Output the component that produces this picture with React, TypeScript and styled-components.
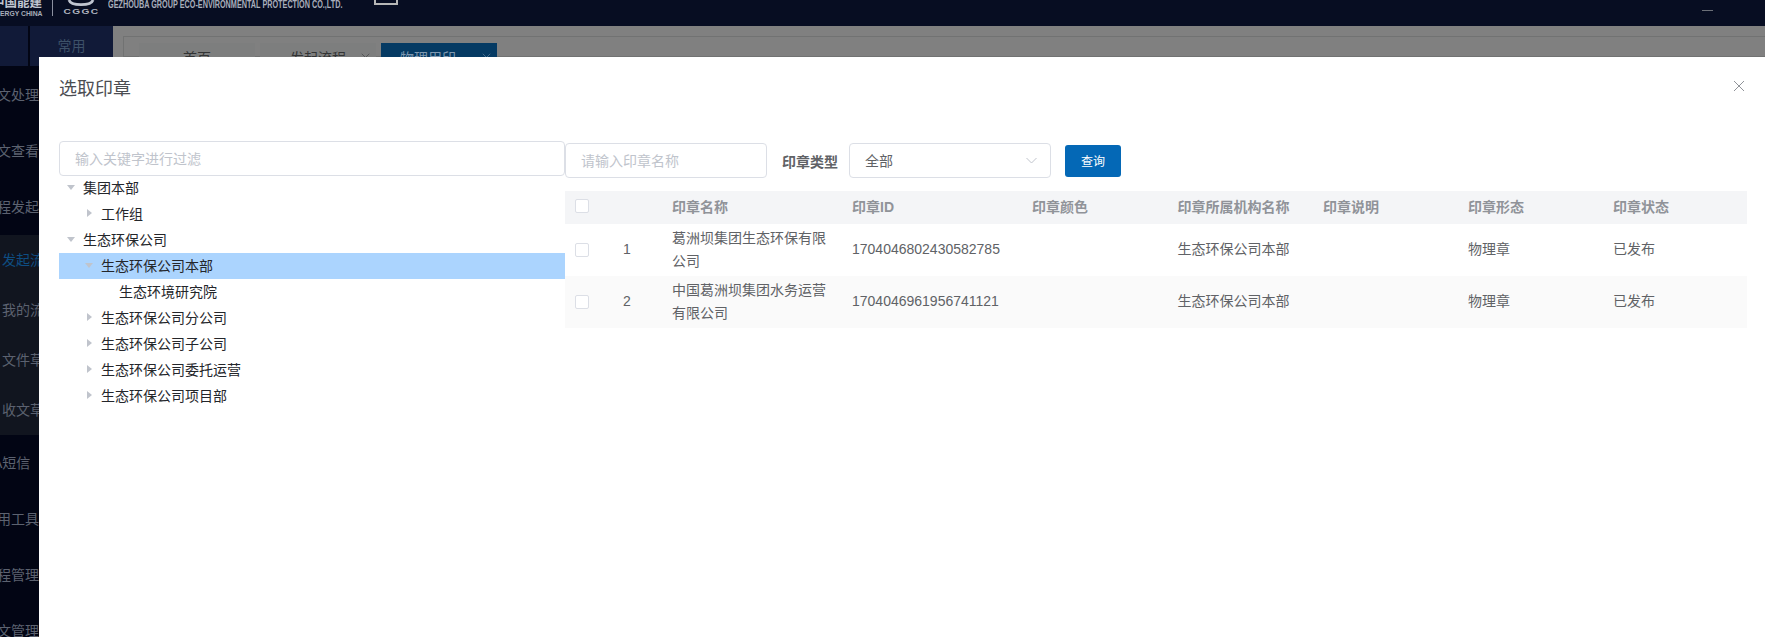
import { FC } from 'react';
import styled, { createGlobalStyle } from 'styled-components';

const GlobalStyle = createGlobalStyle`
  html, body {
    margin: 0;
    padding: 0;
    background: #808080;
  }
  * {
    box-sizing: border-box;
  }
  body {
    font-family: "Liberation Sans", "Noto Sans CJK SC", sans-serif;
    font-size: 14px;
  }
`;

const Page = styled.div`
  position: relative;
  width: 1765px;
  height: 637px;
  overflow: hidden;
  display: flex;
  flex-direction: column;
  background: #808080;
`;

/* top header, the logo is cut by the top of the window */
const Header = styled.header`
  flex: none;
  height: 26px;
  background: #070d22;
  display: flex;
  align-items: flex-start;
  overflow: hidden;
  position: relative;
`;

const BrandCn = styled.div`
  width: 43px;
  flex: none;
  display: flex;
  flex-direction: column;
  color: #c0c5d0;
  overflow: hidden;
`;

const BrandCnTitle = styled.span`
  margin-top: -4px;
  margin-left: -8px;
  font-size: 12.5px;
  line-height: 14px;
  font-weight: 700;
  white-space: nowrap;
`;

const BrandEn = styled.span`
  margin-left: -9.5px;
  font-size: 6.8px;
  line-height: 8px;
  font-weight: 700;
  color: #a8adba;
  white-space: nowrap;
`;

const BrandDivider = styled.span`
  flex: none;
  width: 1px;
  height: 16px;
  margin-left: 9px;
  background: #8b90a0;
`;

const LogoMark = styled.div`
  flex: none;
  width: 36px;
  margin-left: 10px;
  display: flex;
  flex-direction: column;
  align-items: center;
`;

const LogoCode = styled.span`
  margin-top: 1px;
  font-size: 7px;
  line-height: 6px;
  font-weight: 700;
  letter-spacing: 1px;
  color: #aeb3bf;
  transform: scaleX(1.45);
`;

const CompanyEn = styled.span`
  flex: none;
  width: 266px;
  margin-left: 9px;
  font-size: 10px;
  line-height: 10px;
  font-weight: 700;
  color: #a9aebb;
  white-space: nowrap;
  transform: scaleX(0.725);
  transform-origin: left top;
`;

const MenuToggle = styled.span`
  flex: none;
  width: 24px;
  height: 6px;
  border-top: 1px solid #b6b6b6;
  border-bottom: 2px solid #b6b6b6;
  border-left: 2px solid #b6b6b6;
  border-right: 2px solid #b6b6b6;
  margin-top: -1px;
`;

const UserDash = styled.span`
  position: absolute;
  left: 1702px;
  top: 10px;
  width: 11px;
  height: 1px;
  background: #6b6f78;
`;

const Body = styled.div`
  flex: 1;
  display: flex;
  min-height: 0;
`;

const Sidebar = styled.aside`
  flex: none;
  width: 113px;
  background: #020514;
  overflow: hidden;
  display: flex;
  flex-direction: column;
`;

const Rail = styled.div`
  flex: none;
  height: 41px;
  display: flex;
  gap: 2px;
`;

const RailCell = styled.div<{ $wide?: boolean }>`
  width: ${({ $wide }) => ($wide ? '83px' : '28px')};
  height: 40px;
  background: #111a38;
  color: #3d5168;
  font-size: 14px;
  line-height: 40px;
  text-align: center;
`;

const MenuItem = styled.div<{ $shift: number }>`
  flex: none;
  height: 56px;
  line-height: 56px;
  margin-left: ${({ $shift }) => $shift}px;
  color: #5c6270;
  white-space: nowrap;
`;

const SubMenu = styled.div`
  flex: none;
  height: 200px;
  background: #11151f;
`;

const SubItem = styled.div<{ $active?: boolean }>`
  height: 50px;
  line-height: 50px;
  padding-left: 2px;
  color: ${({ $active }) => ($active ? '#0e4d82' : '#5c6270')};
  white-space: nowrap;
`;

const Content = styled.main`
  flex: 1;
  padding: 10px 0 0 10px;
  min-width: 0;
`;

const TabBar = styled.div`
  height: 21px;
  border: 1px solid #717272;
  border-right: 0;
  padding: 6px 0 0 15px;
  display: flex;
  gap: 5px;
`;

const Tab = styled.div<{ $active?: boolean }>`
  flex: none;
  width: 116px;
  height: 30px;
  line-height: 30px;
  padding-right: ${({ $active }) => ($active ? '22px' : '0')};
  background: ${({ $active }) => ($active ? '#053a63' : '#7d7e7e')};
  color: ${({ $active }) => ($active ? '#7f98b0' : '#333435')};
  display: flex;
  justify-content: center;
  position: relative;
`;

const TabClose = styled.span`
  position: absolute;
  right: 6px;
  top: 10px;
  display: flex;
  opacity: 0.7;
`;

/* dialog, lies over the page */
const Modal = styled.section`
  position: absolute;
  left: 39px;
  top: 57px;
  right: 0;
  bottom: 0;
  background: #fff;
  padding: 21px 18px 0 20px;
`;

const ModalTitle = styled.h2`
  margin: 0;
  font-size: 18px;
  line-height: 22px;
  font-weight: 400;
  color: #4b4d52;
`;

const CloseButton = styled.button`
  position: absolute;
  top: 23px;
  right: 20px;
  width: 12px;
  height: 12px;
  padding: 0;
  border: 0;
  background: none;
  display: flex;
  color: #909399;
`;

const ModalBody = styled.div`
  margin-top: 41px;
  display: flex;
`;

const TreePane = styled.div`
  flex: none;
  width: 506px;
`;

const TextInput = styled.div<{ $width?: number }>`
  flex: none;
  width: ${({ $width }) => ($width ? `${$width}px` : '100%')};
  height: 35px;
  line-height: 34px;
  padding: 0 15px;
  border: 1px solid #dcdfe6;
  border-radius: 4px;
  background: #fff;
  color: #c0c4cc;
`;

const TreeList = styled.div`
  margin-top: -1px;
`;

const TreeRow = styled.div<{ $level: number; $selected?: boolean }>`
  height: 26px;
  padding-left: ${({ $level }) => $level * 18 + 6}px;
  padding-bottom: 2px;
  display: flex;
  align-items: center;
  background: ${({ $selected }) => ($selected ? '#abd4fe' : 'transparent')};
  color: #24262b;
  white-space: nowrap;
`;

const Caret = styled.span<{ $state: 'open' | 'closed' | 'leaf' }>`
  flex: none;
  width: 12px;
  height: 12px;
  margin-right: 6px;
  display: flex;
  align-items: center;
  justify-content: center;

  &::before {
    content: '';
    display: ${({ $state }) => ($state === 'leaf' ? 'none' : 'block')};
    width: 0;
    height: 0;
    border-style: solid;
    border-color: transparent;
    border-width: ${({ $state }) =>
      $state === 'open' ? '5px 4px 0 4px' : '4px 0 4px 5px'};
    border-top-color: ${({ $state }) => ($state === 'open' ? '#c0c4cc' : 'transparent')};
    border-left-color: ${({ $state }) => ($state === 'closed' ? '#c0c4cc' : 'transparent')};
  }
`;

const TablePane = styled.div`
  flex: 1;
  min-width: 0;
  padding-top: 2px;
`;

const Toolbar = styled.div`
  display: flex;
  align-items: center;
  height: 35px;
`;

const FieldLabel = styled.label`
  flex: none;
  margin: 0 11px 0 15px;
  font-weight: 700;
  color: #606266;
`;

const SelectBox = styled.div`
  flex: none;
  width: 202px;
  height: 35px;
  padding: 0 13px 1px 15px;
  border: 1px solid #dcdfe6;
  border-radius: 4px;
  color: #606266;
  display: flex;
  align-items: center;
  justify-content: space-between;
`;

const QueryButton = styled.button`
  flex: none;
  width: 56px;
  height: 32px;
  margin-left: 14px;
  padding: 0;
  border: 0;
  border-radius: 3px;
  background: #0468b6;
  color: #fff;
  font-family: inherit;
  font-size: 12px;
`;

const columns = '27px 70px 180px 180px 145.5px 145.5px 145px 145px 1fr';

const TableHead = styled.div`
  margin-top: 13px;
  height: 33px;
  padding-bottom: 3px;
  display: grid;
  grid-template-columns: ${columns};
  align-items: center;
  background: #f4f5f7;
  color: #909399;
  font-weight: 700;
`;

const TableRow = styled.div<{ $striped?: boolean }>`
  height: 52px;
  padding-bottom: 1px;
  display: grid;
  grid-template-columns: ${columns};
  align-items: center;
  background: ${({ $striped }) => ($striped ? '#fafafa' : '#fff')};
  color: #606266;
  line-height: 23px;
`;

const Cell = styled.div<{ $center?: boolean }>`
  padding: 0 10px;
  text-align: ${({ $center }) => ($center ? 'center' : 'left')};
  min-width: 0;
`;

const CheckCell = styled.div`
  padding-left: 10px;
  display: flex;
`;

const Checkbox = styled.span`
  flex: none;
  width: 14px;
  height: 14px;
  border: 1px solid #dcdfe6;
  border-radius: 2px;
  background: #fff;
`;

const treeNodes: { label: string; level: number; state: 'open' | 'closed' | 'leaf'; selected?: boolean }[] = [
  { label: '集团本部', level: 0, state: 'open' },
  { label: '工作组', level: 1, state: 'closed' },
  { label: '生态环保公司', level: 0, state: 'open' },
  { label: '生态环保公司本部', level: 1, state: 'open', selected: true },
  { label: '生态环境研究院', level: 2, state: 'leaf' },
  { label: '生态环保公司分公司', level: 1, state: 'closed' },
  { label: '生态环保公司子公司', level: 1, state: 'closed' },
  { label: '生态环保公司委托运营', level: 1, state: 'closed' },
  { label: '生态环保公司项目部', level: 1, state: 'closed' },
];

const headers = ['印章名称', '印章ID', '印章颜色', '印章所属机构名称', '印章说明', '印章形态', '印章状态'];

const seals = [
  { name: '葛洲坝集团生态环保有限公司', id: '1704046802430582785' },
  { name: '中国葛洲坝集团水务运营有限公司', id: '1704046961956741121' },
];

const Chevron: FC = () => (
  <svg width="11" height="7" viewBox="0 0 11 7" fill="none">
    <path d="M0.5 1L5.5 6L10.5 1" stroke="#c0c4cc" strokeWidth="1" />
  </svg>
);

const Cross: FC<{ size?: number }> = ({ size = 12 }) => (
  <svg width={size} height={size} viewBox="0 0 12 12" fill="none">
    <path d="M1 1L11 11M11 1L1 11" stroke="currentColor" strokeWidth="1" />
  </svg>
);

export default function App() {
  return (
    <Page>
      <GlobalStyle />
      <Header>
        <BrandCn>
          <BrandCnTitle>中国能建</BrandCnTitle>
          <BrandEn>ENERGY CHINA</BrandEn>
        </BrandCn>
        <BrandDivider />
        <LogoMark>
          <svg width="30" height="8" viewBox="0 0 30 8" fill="none">
            <path d="M3 0C4 3 9 4.7 15 4.7C21 4.7 26 3 27 0" stroke="#c0c5d0" strokeWidth="2.8" />
          </svg>
          <LogoCode>CGGC</LogoCode>
        </LogoMark>
        <CompanyEn>GEZHOUBA GROUP ECO-ENVIRONMENTAL PROTECTION CO.,LTD.</CompanyEn>
        <MenuToggle />
        <UserDash />
      </Header>
      <Body>
        <Sidebar>
          <Rail>
            <RailCell />
            <RailCell $wide>常用</RailCell>
          </Rail>
          <MenuItem $shift={-17}>公文处理</MenuItem>
          <MenuItem $shift={-17}>公文查看</MenuItem>
          <MenuItem $shift={-17}>流程发起</MenuItem>
          <SubMenu>
            <SubItem $active>发起流程</SubItem>
            <SubItem>我的流程</SubItem>
            <SubItem>文件草稿</SubItem>
            <SubItem>收文草稿</SubItem>
          </SubMenu>
          <MenuItem $shift={-18}>OA短信</MenuItem>
          <MenuItem $shift={-17}>常用工具</MenuItem>
          <MenuItem $shift={-17}>流程管理</MenuItem>
          <MenuItem $shift={-17}>公文管理</MenuItem>
        </Sidebar>
        <Content>
          <TabBar>
            <Tab>首页</Tab>
            <Tab>
              发起流程
              <TabClose>
                <Cross size={9} />
              </TabClose>
            </Tab>
            <Tab $active>
              物理用印
              <TabClose>
                <Cross size={9} />
              </TabClose>
            </Tab>
          </TabBar>
        </Content>
      </Body>

      <Modal>
        <ModalTitle>选取印章</ModalTitle>
        <CloseButton>
          <Cross />
        </CloseButton>
        <ModalBody>
          <TreePane>
            <TextInput>输入关键字进行过滤</TextInput>
            <TreeList>
              {treeNodes.map(node => (
                <TreeRow key={node.label} $level={node.level} $selected={node.selected}>
                  <Caret $state={node.state} />
                  {node.label}
                </TreeRow>
              ))}
            </TreeList>
          </TreePane>
          <TablePane>
            <Toolbar>
              <TextInput $width={202}>请输入印章名称</TextInput>
              <FieldLabel>印章类型</FieldLabel>
              <SelectBox>
                全部
                <Chevron />
              </SelectBox>
              <QueryButton>查询</QueryButton>
            </Toolbar>
            <TableHead>
              <CheckCell>
                <Checkbox />
              </CheckCell>
              <Cell />
              {headers.map(title => (
                <Cell key={title}>{title}</Cell>
              ))}
            </TableHead>
            {seals.map((seal, index) => (
              <TableRow key={seal.id} $striped={index % 2 === 1}>
                <CheckCell>
                  <Checkbox />
                </CheckCell>
                <Cell $center>{index + 1}</Cell>
                <Cell>{seal.name}</Cell>
                <Cell>{seal.id}</Cell>
                <Cell />
                <Cell>生态环保公司本部</Cell>
                <Cell />
                <Cell>物理章</Cell>
                <Cell>已发布</Cell>
              </TableRow>
            ))}
          </TablePane>
        </ModalBody>
      </Modal>
    </Page>
  );
}
